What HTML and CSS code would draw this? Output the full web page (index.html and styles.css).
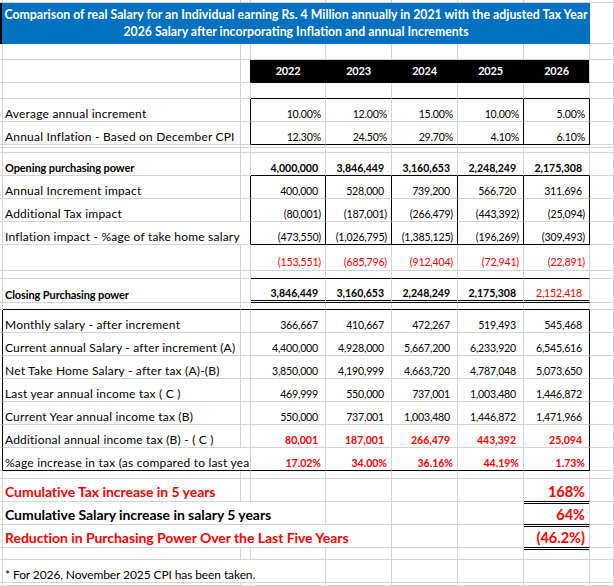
FILE: index.html
```html
<!DOCTYPE html>
<html>
<head>
<meta charset="utf-8">
<title>Salary comparison</title>
<link rel="stylesheet" href="styles.css">
</head>
<body>
<div class="sheet">
  <!-- r0 -->
  <div class="c"></div><div class="c"></div><div class="c"></div><div class="c"></div><div class="c"></div><div class="c"></div><div class="c"></div><div class="c"></div><div class="c"></div>
  <!-- title -->
  <div class="c edge"></div>
  <div class="c title span7">Comparison of real Salary for an Individual earning Rs. 4 Million annually in 2021 with the adjusted Tax Year<br>2026 Salary after incorporating Inflation and annual Increments</div>
  <div class="c"></div>
  <!-- r2 -->
  <div class="c"></div><div class="c"></div><div class="c"></div><div class="c"></div><div class="c"></div><div class="c"></div><div class="c"></div><div class="c"></div><div class="c"></div>
  <!-- header -->
  <div class="c"></div><div class="c"></div><div class="c bR"></div>
  <div class="c hdr bR">2022</div><div class="c hdr bR">2023</div><div class="c hdr bR">2024</div><div class="c hdr bR">2025</div><div class="c hdr">2026</div>
  <div class="c"></div>
  <!-- r4 -->
  <div class="c"></div><div class="c"></div><div class="c"></div>
  <div class="c bB"></div><div class="c bB"></div><div class="c bB"></div><div class="c bB"></div><div class="c bB"></div>
  <div class="c"></div>
  <!-- avg -->
  <div class="c"></div><div class="c lab">Average annual increment</div><div class="c bR"></div>
  <div class="c num">10.00%</div><div class="c num">12.00%</div><div class="c num">15.00%</div><div class="c num bR">10.00%</div><div class="c num bR">5.00%</div>
  <div class="c"></div>
  <!-- inflation -->
  <div class="c"></div><div class="c lab">Annual Inflation - Based on December CPI</div><div class="c bR"></div>
  <div class="c num bB">12.30%</div><div class="c num bB">24.50%</div><div class="c num bB">29.70%</div><div class="c num bR bB">4.10%</div><div class="c num bR bB">6.10%</div>
  <div class="c"></div>
  <!-- t1 -->
  <div class="c"></div><div class="c"></div><div class="c"></div><div class="c"></div><div class="c"></div><div class="c"></div><div class="c"></div><div class="c"></div><div class="c"></div>
  <!-- t2 -->
  <div class="c"></div><div class="c"></div><div class="c"></div><div class="c"></div><div class="c"></div><div class="c"></div><div class="c"></div><div class="c"></div><div class="c"></div>
  <!-- opening -->
  <div class="c"></div><div class="c lab bold">Opening purchasing power</div><div class="c"></div>
  <div class="c acc bold bB">4,000,000</div><div class="c acc bold bB">3,846,449</div><div class="c acc bold bB">3,160,653</div><div class="c acc bold bB">2,248,249</div><div class="c acc bold bB">2,175,308</div>
  <div class="c"></div>
  <!-- increment impact -->
  <div class="c"></div><div class="c lab">Annual Increment impact</div><div class="c bR"></div>
  <div class="c acc bR">400,000</div><div class="c acc bR">528,000</div><div class="c acc bR">739,200</div><div class="c acc bR">566,720</div><div class="c acc bR">311,696</div>
  <div class="c"></div>
  <!-- tax impact -->
  <div class="c"></div><div class="c lab">Additional Tax impact</div><div class="c bR"></div>
  <div class="c num bR">(80,001)</div><div class="c num bR">(187,001)</div><div class="c num bR">(266,479)</div><div class="c num bR">(443,392)</div><div class="c num bR">(25,094)</div>
  <div class="c"></div>
  <!-- inflation impact -->
  <div class="c"></div><div class="c lab span2 bR">Inflation impact - %age of take home salary</div>
  <div class="c num bR bB">(473,550)</div><div class="c num bR bB">(1,026,795)</div><div class="c num bR bB">(1,385,125)</div><div class="c num bR bB">(196,269)</div><div class="c num bR bB">(309,493)</div>
  <div class="c"></div>
  <!-- red net row -->
  <div class="c"></div><div class="c"></div><div class="c"></div>
  <div class="c num red low">(153,551)</div><div class="c num red low">(685,796)</div><div class="c num red low">(912,404)</div><div class="c num red low">(72,941)</div><div class="c num red low">(22,891)</div>
  <div class="c"></div>
  <!-- s1 -->
  <div class="c"></div><div class="c"></div><div class="c"></div>
  <div class="c bB"></div><div class="c bB"></div><div class="c bB"></div><div class="c bB"></div><div class="c bB"></div>
  <div class="c"></div>
  <!-- closing -->
  <div class="c"></div><div class="c lab bold">Closing Purchasing power</div><div class="c"></div>
  <div class="c acc bold dB">3,846,449</div><div class="c acc bold dB">3,160,653</div><div class="c acc bold dB">2,248,249</div><div class="c acc bold dB">2,175,308</div><div class="c acc dB red">2,152,418</div>
  <div class="c"></div>
  <!-- s2 -->
  <div class="c"></div><div class="c bB"></div><div class="c bB"></div>
  <div class="c bB"></div><div class="c bB"></div><div class="c bB"></div><div class="c bB"></div><div class="c bB"></div>
  <div class="c"></div>
  <!-- monthly -->
  <div class="c bR"></div><div class="c lab">Monthly salary - after increment</div><div class="c"></div>
  <div class="c acc">366,667</div><div class="c acc">410,667</div><div class="c acc">472,267</div><div class="c acc">519,493</div><div class="c acc bR">545,468</div>
  <div class="c"></div>
  <!-- annual salary -->
  <div class="c bR"></div><div class="c lab">Current annual Salary - after increment (A)</div><div class="c"></div>
  <div class="c acc">4,400,000</div><div class="c acc">4,928,000</div><div class="c acc">5,667,200</div><div class="c acc">6,233,920</div><div class="c acc bR">6,545,616</div>
  <div class="c"></div>
  <!-- net take home -->
  <div class="c bR"></div><div class="c lab">Net Take Home Salary - after tax (A)-(B)</div><div class="c"></div>
  <div class="c acc">3,850,000</div><div class="c acc">4,190,999</div><div class="c acc">4,663,720</div><div class="c acc">4,787,048</div><div class="c acc bR">5,073,650</div>
  <div class="c"></div>
  <!-- last year tax -->
  <div class="c bR"></div><div class="c lab">Last year annual income tax ( C )</div><div class="c"></div>
  <div class="c acc">469,999</div><div class="c acc">550,000</div><div class="c acc">737,001</div><div class="c acc">1,003,480</div><div class="c acc bR">1,446,872</div>
  <div class="c"></div>
  <!-- current year tax -->
  <div class="c bR"></div><div class="c lab">Current Year annual income tax (B)</div><div class="c"></div>
  <div class="c acc">550,000</div><div class="c acc">737,001</div><div class="c acc">1,003,480</div><div class="c acc">1,446,872</div><div class="c acc bR">1,471,966</div>
  <div class="c"></div>
  <!-- additional tax -->
  <div class="c bR"></div><div class="c lab">Additional annual income tax (B) - ( C )</div><div class="c"></div>
  <div class="c acc red bold">80,001</div><div class="c acc red bold">187,001</div><div class="c acc red bold">266,479</div><div class="c acc red bold">443,392</div><div class="c acc red bold bR">25,094</div>
  <div class="c"></div>
  <!-- pct increase -->
  <div class="c bR"></div><div class="c lab span2 bB">%age increase in tax (as compared to last year)</div>
  <div class="c num red bold bB">17.02%</div><div class="c num red bold bB">34.00%</div><div class="c num red bold bB">36.16%</div><div class="c num red bold bB">44.19%</div><div class="c num red bold bR bB">1.73%</div>
  <div class="c"></div>
  <!-- s3 -->
  <div class="c"></div><div class="c"></div><div class="c"></div><div class="c"></div><div class="c"></div><div class="c"></div><div class="c"></div><div class="c"></div><div class="c"></div>
  <!-- cumulative tax -->
  <div class="c"></div><div class="c lab big red">Cumulative Tax increase in 5 years</div><div class="c"></div>
  <div class="c"></div><div class="c"></div><div class="c"></div><div class="c"></div><div class="c pct big red bB">168%</div>
  <div class="c"></div>
  <!-- cumulative salary -->
  <div class="c"></div><div class="c lab big span3">Cumulative Salary increase in salary 5 years</div>
  <div class="c"></div><div class="c"></div><div class="c"></div><div class="c pct big red bB dbl">64%</div>
  <div class="c"></div>
  <!-- reduction -->
  <div class="c"></div><div class="c lab big red span4">Reduction in Purchasing Power Over the Last Five Years</div>
  <div class="c"></div><div class="c"></div><div class="c pct big red bB dbl">(46.2%)</div>
  <div class="c"></div>
  <!-- e -->
  <div class="c"></div><div class="c"></div><div class="c"></div><div class="c"></div><div class="c"></div><div class="c"></div><div class="c"></div><div class="c dbl"></div><div class="c"></div>
  <!-- footnote -->
  <div class="c"></div><div class="c lab note span3">* For 2026, November 2025 CPI has been taken.</div>
  <div class="c"></div><div class="c"></div><div class="c"></div><div class="c"></div><div class="c"></div>
  <!-- end -->
  <div class="c"></div><div class="c"></div><div class="c"></div><div class="c"></div><div class="c"></div><div class="c"></div><div class="c"></div><div class="c"></div><div class="c"></div>
</div>
</body>
</html>
```

FILE: styles.css
```css
html, body {
  margin: 0;
  padding: 0;
  background: #ffffff;
  overflow: hidden;
}

.sheet {
  display: grid;
  width: 614px;
  grid-template-columns: 3px 238px 10px 75px 66px 66px 66px 66px 24px;
  grid-template-rows:
    3px 41px 16px 23px 16px
    23px 23px 3px 5px
    23px 23px 23px 23px
    26px 8px 24px 7px
    23px 23px 23px 23px 23px 23px 23px
    8px 23px 23px 23px 12px 23px 3px;
  font-family: Lato, "Liberation Sans", sans-serif;
  font-size: 12px;
  color: #000000;
}

.c {
  box-sizing: border-box;
  border-right: 1px solid #d4d4d4;
  border-bottom: 1px solid #d4d4d4;
  overflow: hidden;
  white-space: nowrap;
  display: flex;
  align-items: flex-end;
  line-height: 14px;
  padding: 0;
  min-width: 0;
}

.lab {
  padding-left: 2px;
  justify-content: flex-start;
  letter-spacing: 0.2px;
}

.lab.bold {
  font-size: 11px;
  letter-spacing: -0.1px;
}

.lab.note {
  letter-spacing: -0.1px;
}

.num,
.acc {
  justify-content: flex-end;
  font-size: 10.6px;
  letter-spacing: -0.2px;
}

.num { padding-right: 4px; }
.acc { padding-right: 7px; }

.num.bold,
.acc.bold {
  letter-spacing: -0.05px;
}

.bold { font-weight: 700; }
.red { color: #ff0000; }
.low { padding-bottom: 1px; }

.big {
  font-size: 14px;
  font-weight: 700;
  line-height: 17px;
  padding-bottom: 1px;
  letter-spacing: -0.05px;
}

.pct {
  justify-content: flex-end;
  padding-right: 4px;
  font-size: 14.5px;
  letter-spacing: 0;
}

.span2 { grid-column: span 2; }
.span3 { grid-column: span 3; }
.span4 { grid-column: span 4; }
.span7 { grid-column: span 7; }

.bR { border-right-color: #000000; }
.bB { border-bottom-color: #000000; }
.dB { border-bottom: 3px double #000000; }
.dbl { box-shadow: inset 0 1px 0 #ffffff, inset 0 2px 0 #000000; }

.edge {
  background: #000000;
  border-right-color: #0070c0;
  border-bottom-color: #000000;
}

.title {
  background: #0070c0;
  border-color: #0070c0;
  color: #ffffff;
  font-weight: 700;
  font-size: 12.3px;
  line-height: 17px;
  text-align: center;
  justify-content: center;
  align-items: center;
  padding: 0 0 1px 0;
}

.hdr {
  background: #000000;
  border-bottom-color: #000000;
  color: #ffffff;
  font-weight: 700;
  font-size: 11px;
  letter-spacing: -0.2px;
  justify-content: center;
  align-items: center;
  padding: 0;
}
```
